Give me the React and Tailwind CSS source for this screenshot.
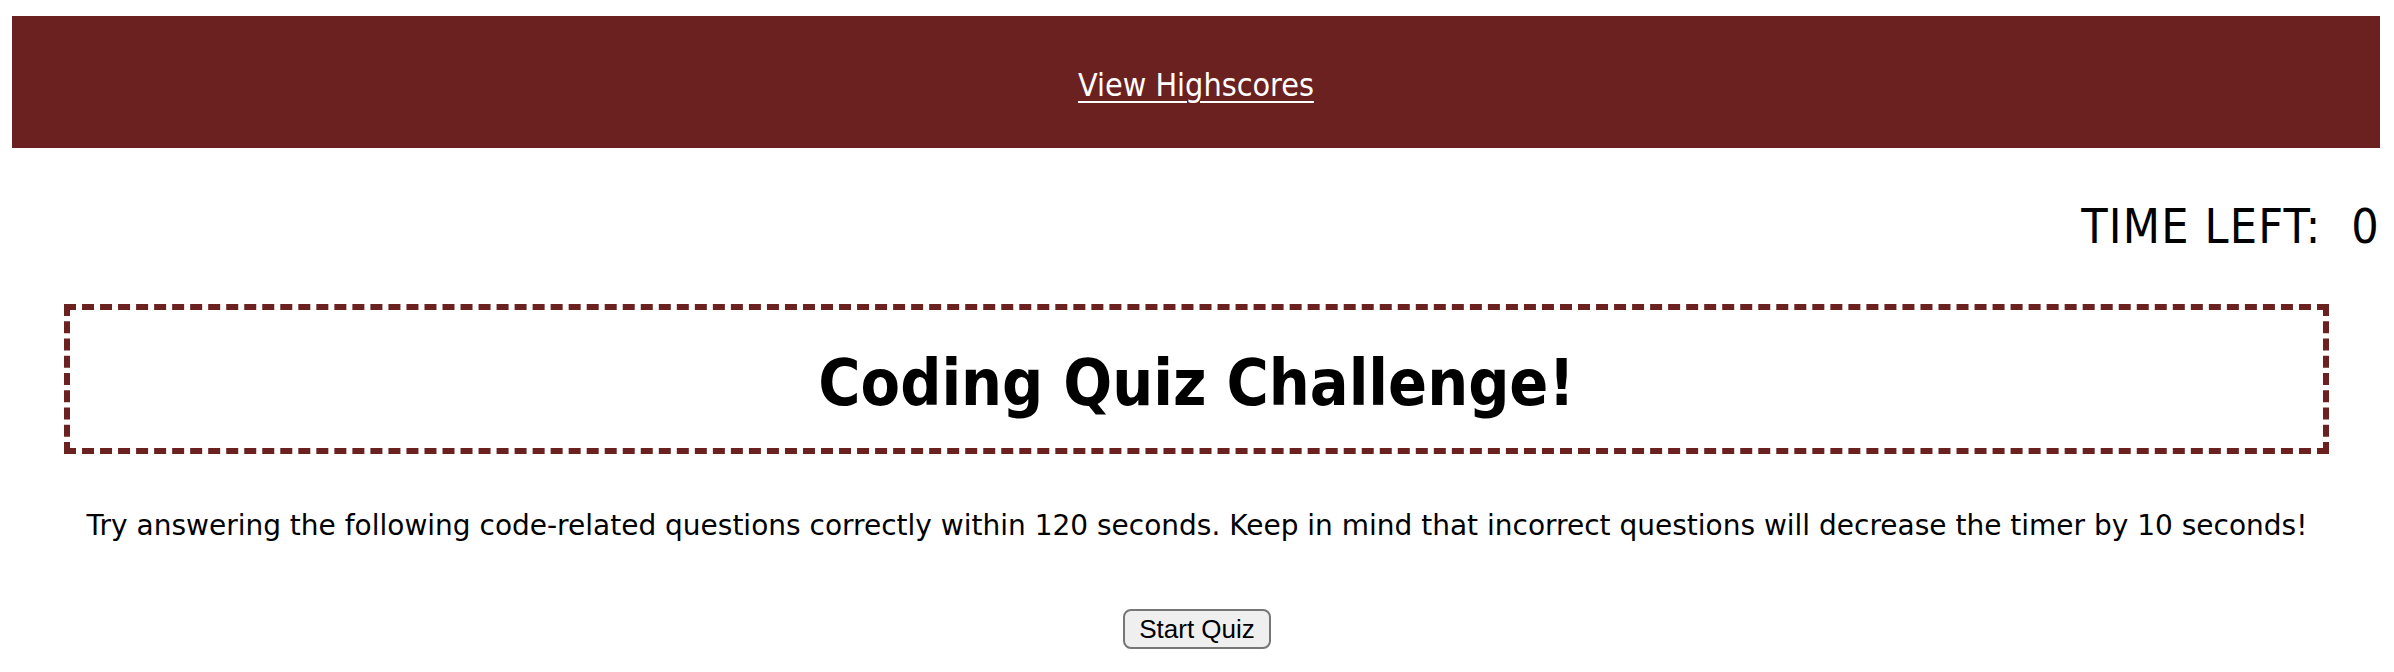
export default function App() {
  return (
    <div className="min-h-[672px] bg-white text-black font-['DejaVu_Sans_Condensed','Liberation_Sans',sans-serif]">
      {/* Header bar */}
      <header className="ml-[12px] mr-[14px] mt-[16px] h-[132px] pt-[6px] bg-[#6b2120] flex items-center justify-center">
        <a href="#" className="text-[32px] leading-none text-white underline underline-offset-[5px] decoration-[2px]">
          View Highscores
        </a>
      </header>

      {/* Timer */}
      <div className="mr-[14px] mt-[54px] h-[48px] text-right text-[48px] leading-none tracking-[1.2px] whitespace-pre">
        TIME LEFT:  0
      </div>

      {/* Title box */}
      <div className="ml-[64px] mr-[65px] mt-[54px] h-[150px] border-[6px] border-dashed border-[#6b2120] pt-[41px]">
        <h1 className="text-center text-[64px] leading-none font-bold">Coding Quiz Challenge!</h1>
      </div>

      <p className="mt-[58px] text-center text-[28px] leading-none font-['DejaVu_Sans',sans-serif]">
        Try answering the following code-related questions correctly within 120 seconds. Keep in mind that incorrect questions will decrease the timer by 10 seconds!
      </p>

      <div className="mt-[69px] flex justify-center">
        <button
          type="button"
          className="h-[40px] px-[14px] rounded-[8px] border-2 border-[#767676] bg-[#efefef] text-[26px] leading-none font-['Liberation_Sans',Arial,sans-serif]"
        >
          Start Quiz
        </button>
      </div>
    </div>
  );
}
